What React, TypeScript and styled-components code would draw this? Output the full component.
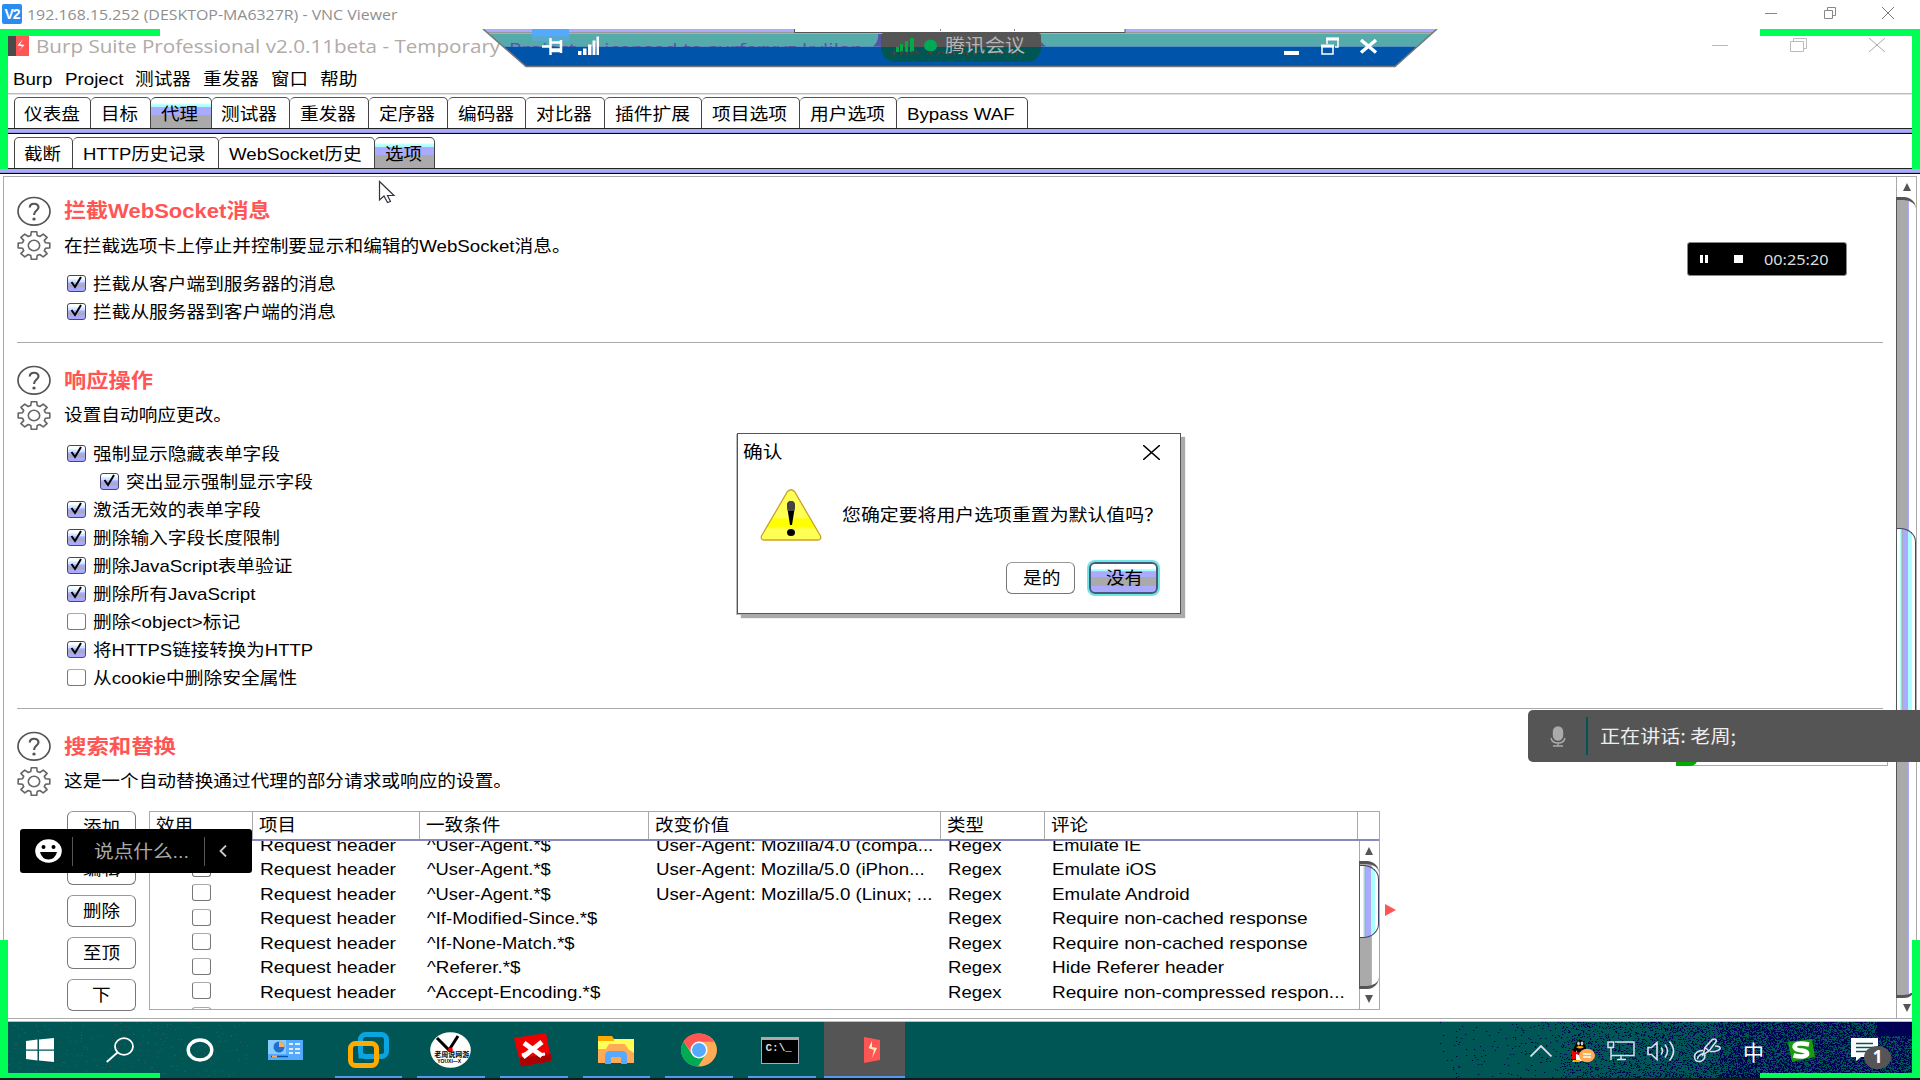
import React, { useLayoutEffect, useRef, useState } from "react";
import styled, { createGlobalStyle, css } from "styled-components";

const SANS = `"Liberation Sans", "Noto Sans CJK SC", sans-serif`;
const UI = `"Open Sans", "Noto Sans CJK SC", sans-serif`;

const Global = createGlobalStyle`
  body { margin: 0; background: #fff; overflow: hidden; }
  * { box-sizing: border-box; }
`;

/* ---------- stretched text ---------- */
const Slot = styled.span<{ $w: number }>`
  display: inline-block;
  flex: none;
  width: ${(p) => p.$w}px;
  white-space: pre;
  line-height: 20px;
`;
const Stretch = styled.span`
  display: inline-block;
  transform-origin: 0 50%;
`;
function T({ w, children }: { w: number; children: string }) {
  const ref = useRef<HTMLSpanElement>(null);
  const [k, setK] = useState(1);
  useLayoutEffect(() => {
    if (ref.current) setK(w / ref.current.offsetWidth);
  }, [w]);
  return (
    <Slot $w={w}>
      <Stretch ref={ref} style={{ transform: `translate(-1px, 1px) scaleX(${k})` }}>
        {children}
      </Stretch>
    </Slot>
  );
}

/* ---------- shell ---------- */
const Screen = styled.div`
  position: relative;
  width: 1920px;
  height: 1080px;
  overflow: hidden;
  display: flex;
  flex-direction: column;
  background: #fff;
  color: #000;
  font-family: ${SANS};
  font-size: 17px;
`;
const ViewerTitle = styled.header`
  height: 29px;
  flex: none;
  display: flex;
  align-items: center;
  padding: 0 26px 3px 2px;
  color: #8f8f8f;
  font-family: ${UI};
  font-size: 15px;
`;
const ViewerLogo = styled.span`
  width: 20px;
  height: 20px;
  margin: 2px 6px 0 0;
  border-radius: 2px;
  background: #2a8cf0;
  color: #fff;
  font: 700 14px/20px "Liberation Sans", sans-serif;
  letter-spacing: -1px;
  text-align: center;
`;
const WindowButtons = styled.div<{ $gap: number }>`
  margin-left: auto;
  display: flex;
  align-items: center;
  gap: ${(p) => p.$gap}px;
`;
const BurpTitle = styled.div`
  height: 35px;
  flex: none;
  display: flex;
  align-items: center;
  padding: 0 35px 3px 8px;
  font-family: ${UI};
  font-size: 18.5px;
  color: #b1aaa8;
`;
const BurpMark = styled.svg`
  margin: 1px 8px 0 0;
`;
const MenuBar = styled.nav`
  height: 29px;
  flex: none;
  display: flex;
  align-items: center;
  padding: 0 0 0 14px;
  gap: 12px;
`;
const Rule = styled.div`
  height: 2px;
  flex: none;
  background: linear-gradient(#bbb 50%, #e2e2e2 50%);
`;
const TabRow = styled.div<{ $h: number }>`
  height: ${(p) => p.$h}px;
  flex: none;
  display: flex;
  align-items: flex-end;
  padding-left: 14px;
`;
const activeFill = css`
  background: linear-gradient(#fff 0 16%, #aff 24% 30%, #aaf 31% 56%, #aaa 57%);
`;
const Tab = styled.div<{ $w: number; $active?: boolean }>`
  width: ${(p) => p.$w}px;
  height: 31px;
  display: flex;
  align-items: center;
  justify-content: center;
  padding-top: 2px;
  border: solid #444;
  border-width: 1px 1.5px 0 0;
  border-top-color: ${(p) => (p.$active ? "#055" : "#555")};
  border-radius: 5px 5px 0 0;
  ${(p) => p.$active && activeFill}
  &:first-child { border-left-width: 1.5px; }
`;
const Band = styled.div`
  height: 6px;
  flex: none;
  background: linear-gradient(#222 0 1px, #aaf 1px 4px, #99d 4px 5px, #000 5px);
`;

/* ---------- scroll pane ---------- */
const Pane = styled.main`
  height: 843px;
  flex: none;
  margin: 2px 3px 0 3px;
  border: solid #aaa;
  border-width: 1px;
  display: flex;
`;
const Content = styled.div`
  flex: 1;
  min-width: 0;
  padding: 16px 13px 0 13px;
`;
const Section = styled.section<{ $last?: boolean }>`
  padding-bottom: ${(p) => (p.$last ? 0 : 15.7)}px;
  margin-bottom: 20px;
  border-bottom: ${(p) => (p.$last ? "none" : "1.5px solid #aaa")};
`;
const Line = styled.div`
  height: 35px;
  display: flex;
  align-items: center;
  gap: 13.5px;
`;
const Heading = styled.h2`
  margin: -1px 0 0;
  display: flex;
  color: #f55;
  font-size: 20px;
  font-weight: 700;
`;
const CheckList = styled.div`
  padding: 7px 0 0 49.5px;
`;
const CheckRow = styled.label<{ $indent?: boolean }>`
  height: 28.06px;
  display: flex;
  align-items: center;
  gap: 8px;
  padding-left: ${(p) => (p.$indent ? 33 : 0)}px;
`;
const Box = styled.span<{ $on?: boolean }>`
  width: 19px;
  height: 17px;
  flex: none;
  display: block;
  margin-top: -1px;
  border: 1.5px solid #777;
  border-top-color: #aaa;
  border-radius: 3px;
  background: #fff;
  ${(p) =>
    p.$on &&
    css`
      border-color: #447;
      background: linear-gradient(#fff 0 15%, #cfe8ff 30% 40%, #aaf 45% 55%, #aab 60% 72%, #aaf 78%);
    `}
  svg { display: block; overflow: visible; margin: -1px 0 0 0; }
`;

/* ---------- table ---------- */
const TableArea = styled.div`
  display: flex;
  padding: 12px 0 0 50px;
`;
const Actions = styled.div`
  width: 68.5px;
  margin-right: 13px;
  display: flex;
  flex-direction: column;
  gap: 10px;
`;
const Button = styled.button<{ $w?: number; $focus?: boolean }>`
  width: ${(p) => p.$w ?? 68.5}px;
  height: 32px;
  padding: 0;
  display: flex;
  align-items: center;
  justify-content: center;
  font: inherit;
  color: #000;
  background: #fff;
  border: 1.5px solid #777;
  border-top-color: #999;
  border-radius: 6px;
  ${(p) =>
    p.$focus &&
    css`
      border: 2px solid #455a78;
      box-shadow: 0 0 0 2px #6ee6e6;
      background: linear-gradient(#fff 0 18%, #aff 20% 26%, #aaf 27% 46%, #aaa 47% 78%, #aaf 79%);
    `}
`;
const Table = styled.div`
  width: 1231px;
  height: 199px;
  flex: none;
  border: 1.5px solid #aaa;
  display: flex;
  flex-direction: column;
  overflow: hidden;
`;
const COLS = "103px 167px 229.5px 292px 104px 313px 1fr";
const HeadRow = styled.div`
  height: 29px;
  flex: none;
  display: grid;
  grid-template-columns: ${COLS};
  border-bottom: 2px solid #88b;
`;
const HeadCell = styled.div`
  display: flex;
  align-items: center;
  padding-left: 7px;
  border-right: 1px solid #aaa;
  &:last-child { border-right: none; }
`;
const TableBody = styled.div`
  flex: 1;
  min-height: 0;
  display: flex;
  overflow: hidden;
`;
const Rows = styled.div`
  flex: 1;
  margin-top: -8.5px;
`;
const Row = styled.div`
  height: 24.5px;
  display: grid;
  grid-template-columns: 103px 167px 229.5px 292px 104px 1fr;
`;
const Cell = styled.div<{ $center?: boolean }>`
  display: flex;
  align-items: center;
  padding-left: ${(p) => (p.$center ? 42 : 8)}px;
  padding-bottom: ${(p) => (p.$center ? 1 : 0)}px;
`;
const RedArrow = styled.div`
  align-self: flex-start;
  margin: 93px 0 0 5px;
  border: solid transparent;
  border-width: 6px 0 6px 11px;
  border-left-color: #f55;
`;

/* ---------- scroll bars ---------- */
const BarBox = styled.div`
  width: 20px;
  flex: none;
  border-left: 1px solid #aaa;
  display: flex;
  flex-direction: column;
`;
const Arrow = styled.div<{ $h: number; $down?: boolean }>`
  height: ${(p) => p.$h}px;
  flex: none;
  display: flex;
  align-items: center;
  justify-content: center;
  &::after {
    content: "";
    border: solid transparent;
    border-width: ${(p) => (p.$down ? "8px 4.5px 0" : "0 4.5px 8px")};
    ${(p) => (p.$down ? "border-top-color" : "border-bottom-color")}: #555;
  }
`;
const Track = styled.div`
  flex: 1;
  margin-left: -1px;
  display: flex;
  flex-direction: column;
  border-left: 1px solid #555;
  border-top: 3px solid #555;
  border-bottom: 3px solid #555;
  border-radius: 0 12px 12px 0;
  background: linear-gradient(90deg, #aaa 0 11px, #aaf 11px 12px, #fff 12px);
`;
const Thumb = styled.div<{ $top: number; $h: number }>`
  margin-top: ${(p) => p.$top}px;
  height: ${(p) => p.$h}px;
  border: 1.5px solid #446;
  border-left: none;
  border-radius: 0 16px 16px 0 / 0 14px 14px 0;
  background: linear-gradient(90deg, #fff 0 3px, #aff 3px 4px, #aab 5px 6px, #aaf 6px 11px, #aff 11px 15px, #fff 15px);
`;

/* ---------- task bar ---------- */
const Gap = styled.div`
  height: 3px;
  flex: none;
  background: linear-gradient(#fff 0 2px, #9cc 2px);
`;
const TaskBar = styled.footer`
  position: relative;
  height: 56px;
  flex: none;
  display: flex;
  background: #055;
  color: #fff;
`;
const Dither = styled.svg`
  position: absolute;
  left: 0;
  top: 0;
`;
const Task = styled.div<{ $w?: number; $run?: boolean; $active?: boolean; $shift?: number }>`
  position: relative;
  width: ${(p) => p.$w ?? 82.7}px;
  height: 56px;
  margin-left: ${(p) => p.$shift ?? 0}px;
  display: flex;
  align-items: center;
  justify-content: center;
  padding-left: ${(p) => (p.$active ? 15 : 0)}px;
  background: ${(p) => (p.$active ? "#555" : "none")};
  ${(p) =>
    p.$run &&
    css`
      &::after {
        content: "";
        position: absolute;
        left: ${p.$active ? 0 : 8}px;
        right: ${p.$active ? 0 : 7}px;
        bottom: 0;
        height: 2px;
        background: #59e;
      }
    `}
`;
const Tray = styled.div`
  position: relative;
  margin-left: auto;
  display: flex;
  align-items: center;
  padding: 1px 28px 0 0;
`;
const TrayItem = styled.div<{ $l: number }>`
  display: flex;
  margin-left: ${(p) => p.$l}px;
`;
const Ime = styled.span`
  width: 21px;
  text-align: center;
  font: 400 21px/24px "Noto Sans CJK SC", sans-serif;
`;
const Notice = styled.div`
  position: relative;
  width: 41px;
  height: 34px;
`;
const Badge = styled.span`
  position: absolute;
  left: 13px;
  top: 12px;
  width: 27px;
  height: 23px;
  border-radius: 50%;
  background: #555;
  text-align: center;
  font: 700 17px/22px ${UI};
`;
const Bottom = styled.div`
  height: 2px;
  background: #111a1c;
`;

/* ---------- overlays ---------- */
const Corner = styled.div<{ $right?: boolean; $bottom?: boolean }>`
  position: absolute;
  ${(p) => (p.$right ? "right: 0" : "left: 0")};
  top: ${(p) => (p.$bottom ? 940 : 29)}px;
  width: 160px;
  height: ${(p) => (p.$bottom ? 138 : 140)}px;
  border: 0 solid #0f5;
  ${(p) => (p.$right ? "border-right-width" : "border-left-width")}: 8px;
  ${(p) => (p.$bottom ? "border-bottom-width: 5px" : "border-top-width: 7px")};
`;
const RemoteBar = styled.svg`
  position: absolute;
  left: 480px;
  top: 29px;
`;
const Ghost = styled.div`
  position: absolute;
  left: 510px;
  top: 36px;
  width: 370px;
  height: 10.5px;
  overflow: hidden;
  color: #55a;
  font-family: ${UI};
  font-size: 17px;
`;
const Meeting = styled.div`
  position: absolute;
  left: 881px;
  top: 33px;
  width: 160px;
  height: 29px;
  border-radius: 3px 3px 14px 14px;
  overflow: hidden;
  display: flex;
  align-items: center;
  gap: 9px;
  padding: 0 0 5px 15px;
  background: linear-gradient(#555 0 14px, #055 14px);
  color: #b4b4b4;
  font-size: 18px;
`;
const GhostAddress = styled.span`
  position: absolute;
  left: 8px;
  top: 14px;
  height: 8px;
  overflow: hidden;
  color: #553c3c;
  font-size: 17px;
  span { margin-top: -3px; }
`;
const Recorder = styled.div`
  position: absolute;
  left: 1686.5px;
  top: 242px;
  width: 160px;
  height: 34px;
  display: flex;
  align-items: center;
  padding: 0 0 0 12.5px;
  border: 1px solid #888;
  border-radius: 3px;
  background: #000;
  color: #ddd;
  font-family: "Noto Sans", sans-serif;
  font-size: 15px;
`;
const RecordTime = styled.div`
  margin-top: -3px;
`;
const Pause = styled.span`
  width: 8px;
  height: 8px;
  border: solid #fff;
  border-width: 0 3px;
  margin-right: 26px;
`;
const Stop = styled.span`
  width: 9px;
  height: 8px;
  margin-right: 22px;
  background: #fff;
`;
const Speaking = styled.div`
  position: absolute;
  left: 1528px;
  top: 710px;
  width: 392px;
  height: 52px;
  display: flex;
  align-items: center;
  padding-left: 22px;
  border-radius: 5px 0 0 5px;
  background: #555;
  color: #eee;
  font-family: "Noto Sans CJK SC", sans-serif;
  font-size: 18px;
`;
const SpeakText = styled.div`
  margin: -4px 0 0 1px;
`;
const SpeakRule = styled.span`
  width: 1.5px;
  height: 38px;
  margin: 0 12px 0 20px;
  background: #055;
`;
const Residue = styled.div`
  position: absolute;
  left: 1676px;
  top: 758px;
  width: 212px;
  height: 8px;
  border: solid #aaa;
  border-width: 0 1px 1px 0;
  &::before {
    content: "";
    display: block;
    width: 22px;
    height: 8px;
    background: #0a0;
    border-radius: 0 0 18px 2px;
  }
`;
const ChatPill = styled.div`
  position: absolute;
  left: 20px;
  top: 829px;
  width: 232px;
  height: 44px;
  display: flex;
  align-items: center;
  padding-left: 15px;
  border-radius: 3px;
  background: #000;
  color: #aaa;
  font-size: 18px;
`;
const PillRule = styled.span<{ $l: number; $r: number }>`
  width: 1px;
  height: 29px;
  margin: 0 ${(p) => p.$r}px 0 ${(p) => p.$l}px;
  background: #555;
`;
const Pointer = styled.svg`
  position: absolute;
  left: 378px;
  top: 180px;
`;
const Dialog = styled.div`
  position: absolute;
  left: 737px;
  top: 433px;
  width: 444px;
  height: 181px;
  display: flex;
  flex-direction: column;
  background: #fff;
  border: 1.5px solid #555;
  box-shadow: 4px 4px 1px #aaa, -1px 1px 0 #bbb;
`;
const DialogTitle = styled.div`
  height: 38px;
  display: flex;
  align-items: center;
  justify-content: space-between;
  padding: 0 20px 2px 5.5px;
`;
const DialogBody = styled.div`
  height: 86px;
  display: flex;
  align-items: center;
  padding: 0 0 1px 21.5px;
  gap: 21.5px;
`;
const DialogButtons = styled.div`
  display: flex;
  justify-content: flex-end;
  gap: 14px;
  padding: 4px 22px 0 0;
`;

/* ---------- icons ---------- */
const MinIcon = ({ w, c }: { w: number; c: string }) => (
  <svg width={w} height="14"><path d={`M0 7.5H${w}`} stroke={c} /></svg>
);
const RestoreIcon = ({ w, h, c }: { w: number; h: number; c: string }) => (
  <svg width={w} height={h} fill="none" stroke={c}>
    <path d={`M.5 3.5H${w - 3.5}V${h - 0.5}H.5ZM3.5 3.5V.5H${w - 0.5}V${h - 3.5}H${w - 3.5}`} />
  </svg>
);
const CloseIcon = ({ w, h, c, s = 1 }: { w: number; h: number; c: string; s?: number }) => (
  <svg width={w} height={h}><path d={`M0 0L${w} ${h}M${w} 0L0 ${h}`} stroke={c} strokeWidth={s} /></svg>
);
const Bolt = "M11 3L5.5 9.5L10.5 10.5L5 17L12.5 9L8 8.2Z";

const HelpIcon = () => (
  <svg width="34" height="30" viewBox="0 0 34 30" fill="none" stroke="#555">
    <ellipse cx="17" cy="15.3" rx="16" ry="13.8" strokeWidth="1.7" />
    <path d="M12.8 11.5C12.8 6.5 21.5 6.6 21.5 11.2C21.5 14.5 17 14.6 17 19" strokeWidth="2.2" />
    <ellipse cx="17" cy="23" rx="1.7" ry="1.5" fill="#555" stroke="none" />
  </svg>
);
const gearPath = (() => {
  const pts: string[] = [];
  for (let i = 0; i < 8; i++) {
    const base = (i * Math.PI) / 4;
    for (const [off, r] of [[-0.27, 0.74], [-0.17, 1], [0.17, 1], [0.27, 0.74]]) {
      pts.push(`${(17 + 16 * r * Math.sin(base + off)).toFixed(1)} ${(15.5 - 14 * r * Math.cos(base + off)).toFixed(1)}`);
    }
  }
  return `M${pts.join("L")}Z`;
})();
const GearIcon = () => (
  <svg width="34" height="31" viewBox="0 0 34 31" fill="none" stroke="#666" strokeWidth="1.6" strokeLinejoin="round">
    <path d={gearPath} />
    <ellipse cx="17" cy="15.5" rx="5.7" ry="5.2" />
  </svg>
);
const Check = ({ on }: { on?: boolean }) => (
  <Box $on={on}>
    {on && (
      <svg width="16" height="15" viewBox="0 0 16 15">
        <path d="M3.5 7L7 12L13 2" fill="none" stroke="#000" strokeWidth="2" />
      </svg>
    )}
  </Box>
);

const ditherPaths = (() => {
  let seed = 7;
  const rnd = () => ((seed = (seed * 16807) % 2147483647) / 2147483647);
  let navy = "M1877 0H1912V14H1877Z";
  for (let y = 0; y < 56; y++) {
    for (let x = 1440; x < 1912; x++) {
      const d = x < 1560 ? 0.014 + (x - 1440) / 9000 : x < 1720 ? 0.12 + (x - 1560) / 1200 : 0.5;
      if (rnd() < d * (y > 51 ? 1.4 : 1)) navy += `M${x} ${y}h1.2v1h-1.2z`;
    }
  }
  let specks = "";
  for (let i = 0; i < 230; i++) specks += `M${(8 + rnd() * 240).toFixed(0)} ${(rnd() * 54).toFixed(0)}h1v1h-1z`;
  return { navy, specks };
})();

/* ---------- data ---------- */
const MENU: [string, number][] = [["Burp", 39.5], ["Project", 58.5], ["测试器", 56], ["重发器", 56], ["窗口", 37], ["帮助", 37.5]];
const TABS: [string, number, number][] = [
  ["仪表盘", 77, 56], ["目标", 60.3, 37], ["代理", 60.3, 37], ["测试器", 78.7, 56], ["重发器", 78.7, 56],
  ["定序器", 78.7, 56], ["编码器", 78.7, 56], ["对比器", 78.7, 56], ["插件扩展", 97.4, 75],
  ["项目选项", 97.4, 75], ["用户选项", 97.4, 75], ["Bypass WAF", 130.7, 108],
];
const SUBTABS: [string, number, number][] = [
  ["截断", 59, 37], ["HTTP历史记录", 145.5, 122], ["WebSocket历史", 156, 133], ["选项", 60.3, 37],
];
type Opt = { t: string; w: number; on?: boolean; indent?: boolean };
const WS_OPTS: Opt[] = [
  { t: "拦截从客户端到服务器的消息", w: 243, on: true },
  { t: "拦截从服务器到客户端的消息", w: 243, on: true },
];
const RESP_OPTS: Opt[] = [
  { t: "强制显示隐藏表单字段", w: 187, on: true },
  { t: "突出显示强制显示字段", w: 187, on: true, indent: true },
  { t: "激活无效的表单字段", w: 168, on: true },
  { t: "删除输入字段长度限制", w: 187, on: true },
  { t: "删除JavaScript表单验证", w: 199, on: true },
  { t: "删除所有JavaScript", w: 162, on: true },
  { t: "删除<object>标记", w: 147 },
  { t: "将HTTPS链接转换为HTTP", w: 220, on: true },
  { t: "从cookie中删除安全属性", w: 204 },
];
type C = [string, number] | null;
const ROWS: C[][] = [
  [["^User-Agent.*$", 124], ["User-Agent: Mozilla/4.0 (compa...", 277], ["Emulate IE", 89]],
  [["^User-Agent.*$", 124], ["User-Agent: Mozilla/5.0 (iPhon...", 269], ["Emulate iOS", 104]],
  [["^User-Agent.*$", 124], ["User-Agent: Mozilla/5.0 (Linux; ...", 276], ["Emulate Android", 138]],
  [["^If-Modified-Since.*$", 170], null, ["Require non-cached response", 256]],
  [["^If-None-Match.*$", 147], null, ["Require non-cached response", 256]],
  [["^Referer.*$", 94], null, ["Hide Referer header", 172]],
  [["^Accept-Encoding.*$", 173], null, ["Require non-compressed respon...", 293]],
  [null, null, null],
];
const HEADS: C[] = [["效用", 37], ["项目", 37], ["一致条件", 74.5], ["改变价值", 74.5], ["类型", 37], ["评论", 37], null];

function SectionHead({ title, tw, text, dw }: { title: string; tw: number; text: string; dw: number }) {
  return (
    <>
      <Line><HelpIcon /><Heading><T w={tw}>{title}</T></Heading></Line>
      <Line><GearIcon /><T w={dw}>{text}</T></Line>
    </>
  );
}
const Options = ({ items }: { items: Opt[] }) => (
  <CheckList>
    {items.map((o) => (
      <CheckRow key={o.t} $indent={o.indent}><Check on={o.on} /><T w={o.w}>{o.t}</T></CheckRow>
    ))}
  </CheckList>
);
const TextCell = ({ c }: { c: C }) => <Cell>{c && <T w={c[1]}>{c[0]}</T>}</Cell>;

function Tasks() {
  return (
    <>
      <Task $w={80}>
        <svg width="28" height="24" viewBox="0 0 28 24" fill="#fff">
          <path d="M0 3L11.5 1.6V11.4H0ZM13 1.4L28 0V11.4H13ZM0 12.8H11.5V22.4L0 21ZM13 12.8H28V24L13 22.6Z" />
        </svg>
      </Task>
      <Task $w={80}>
        <svg width="28" height="26" fill="none" stroke="#fff" strokeWidth="1.8">
          <ellipse cx="18" cy="9.5" rx="9" ry="8.3" /><path d="M11.5 15.5L.7 25" />
        </svg>
      </Task>
      <Task $w={80}>
        <svg width="28" height="24"><ellipse cx="14" cy="12" rx="11.8" ry="10" fill="none" stroke="#fff" strokeWidth="3.4" /></svg>
      </Task>
      <Task $shift={4}>
        <svg width="35" height="22">
          <path d="M0 1H35V21H0Z" fill="#5af" /><path d="M0 1H18V15H0Z" fill="#8cf" />
          <circle cx="11" cy="8" r="5.5" fill="#1f6fd0" /><path d="M11 8V2.5A5.5 5.5 0 0 1 16.5 8Z" fill="#fa5" />
          <path d="M21 5H25M27 5H32M21 10H25M27 10H32M21 14H25M27 14H32" stroke="#def" strokeWidth="2" />
          <path d="M3 17.5H20" stroke="#0055aa" strokeWidth="1.5" /><path d="M4 17.5H9" stroke="#fa5" strokeWidth="2" />
        </svg>
      </Task>
      <Task $run>
        <svg width="41" height="36" fill="none">
          <rect x="12.5" y="2.5" width="26" height="22" rx="5" stroke="#0aa5e0" strokeWidth="5" />
          <rect x="2.5" y="11.5" width="26" height="22" rx="5" stroke="#fa0" strokeWidth="5" />
          <path d="M12.500 17V24.500H24" stroke="#0aa5e0" strokeWidth="4" />
        </svg>
      </Task>
      <Task $run>
        <LogoDisc>
          <svg width="41" height="36">
            <ellipse cx="20.5" cy="18" rx="20.300" ry="17.800" fill="#fff" />
            <path d="M7 6L19 18L28 4" fill="none" stroke="#000" strokeWidth="3" /><circle cx="20.500" cy="18" r="2.400" fill="#f00" />
          </svg>
          <LogoText>老周说网游</LogoText>
          <LogoSub>YOUXI—X</LogoSub>
        </LogoDisc>
      </Task>
      <Task $run>
        <svg width="38" height="34">
          <path d="M0 5L32 0L37.500 28L7 33.500Z" fill="#e00" /><path d="M5.500 25L37 21L37.500 28L7 33.500Z" fill="#a00" />
          <path d="M10 10L28 23M28 9L9 24" stroke="#fff" strokeWidth="5" />
          <path d="M8 22L14 20M24 22L31 21" stroke="#fff" strokeWidth="3" />
        </svg>
      </Task>
      <Task $run>
        <svg width="38" height="30">
          <path d="M1 1H15L17 4V9H1Z" fill="#fa0" /><path d="M1 6H17V4H37V28H1Z" fill="#ff5" />
          <path d="M1 14H9L12 9H28L31 14L37 18V28H1Z" fill="#fa5" />
          <path d="M8 29V21Q8 16 13 16H25Q30 16 30 21V29H24V22H14V29Z" fill="#5af" />
        </svg>
      </Task>
      <Task $run>
        <svg width="38" height="34" viewBox="0 0 38 34">
          <ellipse cx="19" cy="17" rx="18" ry="16.500" fill="#fa5" />
          <path d="M3.500 8.500A18 16.500 0 0 1 34.500 8.700H19L12 20Z" fill="#f55" />
          <path d="M3.500 8.500A18 16.500 0 0 0 18 33.500L26 21L11 20Z" fill="#0a5" />
          <circle cx="19" cy="17" r="8.500" fill="#fff" /><circle cx="19" cy="17" r="7" fill="#5af" />
        </svg>
      </Task>
      <Task $run>
        <Console><span>C:\_</span></Console>
      </Task>
      <Task $run $active $w={81} $shift={1}>
        <svg width="16" height="26"><path d="M0 0L16 3V23L0 26Z" fill="#f55" /><path d="M8 4L4.500 11L10 13L8 21L13 11L8 10Z" fill="#fff0c0" /></svg>
      </Task>
    </>
  );
}
const LogoDisc = styled.div`
  position: relative;
  width: 41px;
  height: 36px;
`;
const LogoText = styled.span`
  position: absolute;
  left: 4px;
  top: 18px;
  color: #000;
  white-space: nowrap;
  font: 700 7px/9px "Noto Sans CJK SC", sans-serif;
`;
const LogoSub = styled.span`
  position: absolute;
  left: 7px;
  top: 26px;
  color: #000;
  white-space: nowrap;
  font: 700 5px/6px "Liberation Sans", sans-serif;
`;
const Console = styled.div`
  width: 38px;
  height: 27px;
  margin-right: 2px;
  border: 1px solid #aab;
  border-top: 3px solid #aaa;
  background: #000;
  color: #ddd;
  overflow: hidden;
  font: 700 11px/12px "Liberation Mono", monospace;
  span { display: block; padding: 2px 0 0 3px; }
`;

export default function App() {
  return (
    <Screen>
      <Global />
      <ViewerTitle>
        <ViewerLogo>V2</ViewerLogo>
        <T w={370}>192.168.15.252 (DESKTOP-MA6327R) - VNC Viewer</T>
        <WindowButtons $gap={46.5}>
          <MinIcon w={12} c="#888" />
          <RestoreIcon w={12} h={12} c="#888" />
          <CloseIcon w={12} h={12} c="#777" />
        </WindowButtons>
      </ViewerTitle>
      <BurpTitle>
        <BurpMark width="21" height="20">
          <path d="M0 0H11V20H0Z" fill="#4a4a4a" /><path d="M8 0H21V20H8Z" fill="#f55" />
          <path d={Bolt} transform="translate(4 0)" fill="#fff" />
        </BurpMark>
        <T w={464}>Burp Suite Professional v2.0.11beta - Temporary</T>
        <WindowButtons $gap={62}>
          <MinIcon w={16} c="#bbb" />
          <RestoreIcon w={17} h={14} c="#bbb" />
          <CloseIcon w={16} h={14} c="#aaa" />
        </WindowButtons>
      </BurpTitle>
      <MenuBar>{MENU.map(([t, w]) => <T key={t} w={w}>{t}</T>)}</MenuBar>
      <Rule />
      <TabRow $h={33}>
        {TABS.map(([t, w, tw]) => <Tab key={t} $w={w} $active={t === "代理"}><T w={tw}>{t}</T></Tab>)}
      </TabRow>
      <Band />
      <TabRow $h={34}>
        {SUBTABS.map(([t, w, tw]) => <Tab key={t} $w={w} $active={t === "选项"}><T w={tw}>{t}</T></Tab>)}
      </TabRow>
      <Band />

      <Pane>
        <Content>
          <Section>
            <SectionHead title="拦截WebSocket消息" tw={206} text="在拦截选项卡上停止并控制要显示和编辑的WebSocket消息。" dw={507} />
            <Options items={WS_OPTS} />
          </Section>
          <Section>
            <SectionHead title="响应操作" tw={89} text="设置自动响应更改。" dw={168} />
            <Options items={RESP_OPTS} />
          </Section>
          <Section $last>
            <SectionHead title="搜索和替换" tw={112} text="这是一个自动替换通过代理的部分请求或响应的设置。" dw={448} />
            <TableArea>
              <Actions>
                {["添加", "编辑", "删除", "至顶"].map((t) => <Button key={t}><T w={37}>{t}</T></Button>)}
                <Button><T w={18.6}>下</T></Button>
              </Actions>
              <Table>
                <HeadRow>
                  {HEADS.map((h, i) => <HeadCell key={i}>{h && <T w={h[1]}>{h[0]}</T>}</HeadCell>)}
                </HeadRow>
                <TableBody>
                  <Rows>
                    {ROWS.map((r, i) => (
                      <Row key={i}>
                        <Cell $center><Check /></Cell>
                        <TextCell c={r[0] && ["Request header", 136]} />
                        <TextCell c={r[0]} />
                        <TextCell c={r[1]} />
                        <TextCell c={r[0] && ["Regex", 53.5]} />
                        <TextCell c={r[2]} />
                      </Row>
                    ))}
                  </Rows>
                  <BarBox>
                    <Arrow $h={20} />
                    <Track><Thumb $top={1} $h={73} /></Track>
                    <Arrow $h={20} $down />
                  </BarBox>
                </TableBody>
              </Table>
              <RedArrow />
            </TableArea>
          </Section>
        </Content>
        <BarBox>
          <Arrow $h={20} />
          <Track><Thumb $top={328} $h={208} /></Track>
          <Arrow $h={20} $down />
        </BarBox>
      </Pane>
      <Gap />

      <TaskBar>
        <Dither width="1920" height="56">
          <path d={ditherPaths.navy} fill="#005" /><path d={ditherPaths.specks} fill="#355a50" />
        </Dither>
        <Tasks />
        <Tray>
          <TrayItem $l={0}><svg width="22" height="12"><path d="M.5 11.500L11 1L21.500 11.500" fill="none" stroke="#dde" strokeWidth="1.800" /></svg></TrayItem>
          <TrayItem $l={18}>
            <svg width="26" height="24">
              <path d="M2 15Q4 8 5 6Q10 -4 15 6Q17 12 19 16L17 22H3Z" fill="#000" />
              <path d="M6 11Q10 22 16 13V22H6Z" fill="#fff" /><path d="M2 11Q8 16 16 11V14Q9 17 6 15V20H2Z" fill="#e00" />
              <path d="M6 8Q10 11 14 8Q10 6 6 8M3 21H10V23H2Z" fill="#fa0" />
              <ellipse cx="8.500" cy="4.500" rx="1.300" ry="2" fill="#ccc" /><ellipse cx="12" cy="4.500" rx="1.300" ry="2" fill="#ccc" />
              <ellipse cx="17" cy="16.500" rx="8" ry="6.800" fill="#fa5" /><path d="M13 15H21M13 18H21" stroke="#ffe" strokeWidth="1.300" />
            </svg>
          </TrayItem>
          <TrayItem $l={11}>
            <svg width="28" height="21" fill="none" stroke="#dde" strokeWidth="1.500">
              <path d="M8 2H27V15.500H4.500M4 8V20M1 2H6.500V7.500H1ZM14 16V19M10 19.500H19" />
            </svg>
          </TrayItem>
          <TrayItem $l={12}>
            <svg width="29" height="22" fill="none" stroke="#dde" strokeWidth="1.600">
              <path d="M1 7.500H4.500L10 2.500V19.500L4.500 14.500H1ZM14 7.500Q17 11 14 14.500M18 4.500Q23 11 18 17.500M22.500 1.500Q30.500 11 22.500 20.500" />
            </svg>
          </TrayItem>
          <TrayItem $l={17}>
            <svg width="28" height="25" fill="none" stroke="#dde" strokeWidth="1.600">
              <path d="M10 17L12 9.500L19.500 1.500Q22.500 0 23.500 3L16 13L10 17ZM12 9.500L16 13" />
              <path d="M22 8Q28 8 27 11Q24 14 17 13.500M10 12.500Q2 13 1.500 18.500Q1.500 24 7 23.500Q12 22 12 17.500Q11 14.500 7 17Q4 19.500 5 21" />
            </svg>
          </TrayItem>
          <TrayItem $l={22}><Ime>中</Ime></TrayItem>
          <TrayItem $l={23}>
            <svg width="28" height="23">
              <path d="M1 3L25 0L28 18L5 23Z" fill="#1a9a10" />
              <path d="M22 5.500Q8 2.500 7.500 8Q8 11 15 11.500Q21 12.500 20 15.500Q17 19 6.500 16.500" fill="none" stroke="#fff" strokeWidth="4.500" />
            </svg>
          </TrayItem>
          <TrayItem $l={36}>
            <Notice>
              <svg width="28" height="28"><path d="M0 4H27V23H10L5 27V23H0Z" fill="#fff" /><path d="M5 9.500H22M5 13.500H22M5 17.500H17" stroke="#055" strokeWidth="1.500" /></svg>
              <Badge>1</Badge>
            </Notice>
          </TrayItem>
        </Tray>
      </TaskBar>
      <Bottom />

      <RemoteBar width="960" height="40">
        <defs><clipPath id="bar"><path d="M3 0H957L915 38H46Z" /></clipPath></defs>
        <g clipPath="url(#bar)">
          <path d="M0 0H960V4H0Z" fill="#aaf" /><path d="M0 3H960V4.500H0Z" fill="#999" />
          <path d="M0 4.500H960V17.500H0Z" fill="#5aa" /><path d="M0 17.500H960V40H0Z" fill="#05a" />
          <path d="M314 0H645V3H314Z" fill="#fff" /><path d="M314.500 0V3.500H645V0" fill="none" stroke="#555" />
          <path d="M460.500 0V2M534.500 0V2" stroke="#888" />
          <path d="M52 0H89V7.500H52Z" fill="#5af" /><path d="M52 7.500H89V12H52Z" fill="#5aaad0" />
          <path d="M398 5Q399 12 393 17.500H402V5ZM556 5Q560 13 566 17.500H556Z" fill="#55a" />
        </g>
        <path d="M3 0L46 37.500H915L957 0" fill="none" stroke="#777" strokeWidth="1.500" />
      </RemoteBar>
      <Ghost><T w={366}>Project - Licensed to surferxyz kyliJan -</T></Ghost>
      <RemoteBar width="960" height="40">
        <path d="M62 17.500H70M70.500 9V26M81 11V24M70 13.500H81M70 20.500H81M70 22H81" stroke="#fff" strokeWidth="2.500" fill="none" />
        <path d="M98 22H101.500V26H98ZM103 19.500H106.500V26H103ZM108 15.500H111.500V26H108ZM112.500 11.500H115.500V26H112.500ZM116.500 7.500H119V26H116.500Z" fill="#fff" />
        <path d="M804 22H819V26H804Z" fill="#fff" />
        <g fill="none" stroke="#fff">
          <path d="M842 17.500H853V25H842Z" strokeWidth="1.500" /><path d="M841 17H854" strokeWidth="3" />
          <path d="M847 15V9.500H858V18H855" strokeWidth="1.500" /><path d="M846 10H859" strokeWidth="3" />
          <path d="M881 11L896 23.500M896 11L881 23.500" strokeWidth="3.500" />
        </g>
      </RemoteBar>
      <Meeting>
        <GhostAddress><T w={130}>192.168.15.252</T></GhostAddress>
        <svg width="19" height="14"><path d="M0 9H3V14H0ZM4 6H7V14H4ZM9 3H12V14H9ZM14 0H18V14H14Z" fill="#00aa44" /></svg>
        <svg width="13" height="13"><ellipse cx="6.500" cy="6.500" rx="6.500" ry="6" fill="#0a5" /></svg>
        <T w={80}>腾讯会议</T>
      </Meeting>

      <Pointer width="20" height="26">
        <path d="M1.500 1.500V20L6 16L9.500 22.500L12.500 21.500L9.500 15.500H16Z" fill="#fff" stroke="#334" strokeWidth="1.200" />
      </Pointer>
      <Recorder><Pause /><Stop /><RecordTime><T w={65}>00:25:20</T></RecordTime></Recorder>

      <Dialog>
        <DialogTitle><T w={39.5}>确认</T><CloseIcon w={17} h={15} c="#000" s={1.5} /></DialogTitle>
        <DialogBody>
          <svg width="62" height="52">
            <defs>
              <linearGradient id="warn" x2="0" y2="1">
                <stop offset=".56" stopColor="#ff5" /><stop offset=".58" stopColor="#ff0" />
                <stop offset=".74" stopColor="#ff0" /><stop offset=".78" stopColor="#ff5" />
              </linearGradient>
            </defs>
            <path d="M27.500 2.500Q31 -1 34.500 2.500L60.500 47Q61.500 51 58 51H4Q.5 51 1.500 47Z" fill="url(#warn)" stroke="#c9a227" strokeWidth="1.300" />
            <path d="M27 17Q27 12 31 12Q35 12 35 17L32 36H30Z" fill="#000" />
            <path d="M27 17Q27 12 31 12Q35 12 35 17L34.200 22H27.800Z" fill="#444" />
            <ellipse cx="31" cy="43.500" rx="4" ry="3.500" fill="#000" />
          </svg>
          <T w={321}>您确定要将用户选项重置为默认值吗？</T>
        </DialogBody>
        <DialogButtons>
          <Button $w={69}><T w={37.5}>是的</T></Button>
          <Button $w={69} $focus><T w={37}>没有</T></Button>
        </DialogButtons>
      </Dialog>

      <Residue />
      <Speaking>
        <svg width="16" height="21" fill="none" stroke="#aaa" strokeWidth="1.400">
          <rect x="3.500" y="1" width="9" height="13" rx="4.500" fill="#aaa" />
          <path d="M1 12Q2 17 8 17Q14 17 15 12M8 17V20M3 20H13" />
        </svg>
        <SpeakRule />
        <SpeakText><T w={136}>正在讲话: 老周;</T></SpeakText>
      </Speaking>
      <ChatPill>
        <svg width="27" height="24">
          <ellipse cx="13.500" cy="12" rx="13.300" ry="11.800" fill="#fff" />
          <ellipse cx="8.500" cy="8" rx="2" ry="2" /><ellipse cx="18.500" cy="8" rx="2" ry="2" />
          <path d="M5 13H22Q20 20.500 13.500 20.500Q7 20.500 5 13Z" />
        </svg>
        <PillRule $l={10} $r={22} />
        <T w={95}>说点什么...</T>
        <PillRule $l={14} $r={14} />
        <svg width="8" height="12"><path d="M7 .5L1.500 6L7 11.500" fill="none" stroke="#ccc" strokeWidth="1.800" /></svg>
      </ChatPill>

      <Corner /><Corner $right /><Corner $bottom /><Corner $right $bottom />
    </Screen>
  );
}
